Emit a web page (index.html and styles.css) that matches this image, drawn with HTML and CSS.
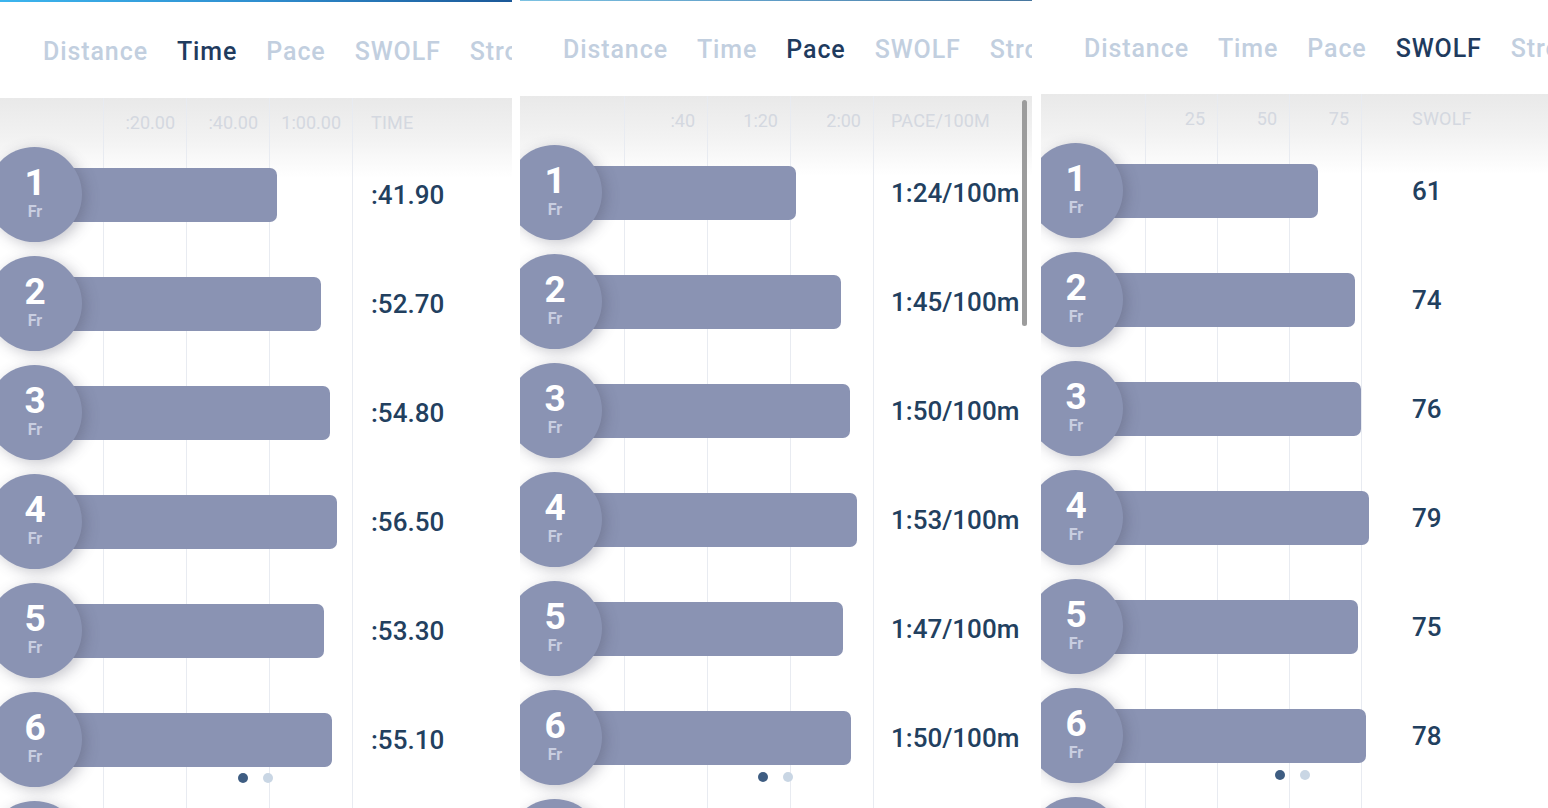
FILE: index.html
```html
<!DOCTYPE html>
<html lang="en">
<head>
<meta charset="utf-8">
<title>Swim laps</title>
<link rel="stylesheet" href="styles.css">
</head>
<body>
<div class="page">

  <section class="panel panel--time">
    <div class="topline topline--time"></div>
    <nav class="tabs tabs--time">
      <span class="tab">Distance</span>
      <span class="tab tab--active">Time</span>
      <span class="tab">Pace</span>
      <span class="tab">SWOLF</span>
      <span class="tab">Strokes</span>
    </nav>
    <div class="chart chart--wide">
      <div class="axis">
        <span class="tick">:20.00</span>
        <span class="tick">:40.00</span>
        <span class="tick">1:00.00</span>
        <span class="axis-title">TIME</span>
      </div>
      <div class="row"><div class="lane"><div class="lap"><span class="lap-num">1</span><span class="lap-stroke">Fr</span></div><div class="bar" style="width:225px"></div></div><div class="value">:41.90</div></div>
      <div class="row"><div class="lane"><div class="lap"><span class="lap-num">2</span><span class="lap-stroke">Fr</span></div><div class="bar" style="width:269px"></div></div><div class="value">:52.70</div></div>
      <div class="row"><div class="lane"><div class="lap"><span class="lap-num">3</span><span class="lap-stroke">Fr</span></div><div class="bar" style="width:278px"></div></div><div class="value">:54.80</div></div>
      <div class="row"><div class="lane"><div class="lap"><span class="lap-num">4</span><span class="lap-stroke">Fr</span></div><div class="bar" style="width:285px"></div></div><div class="value">:56.50</div></div>
      <div class="row"><div class="lane"><div class="lap"><span class="lap-num">5</span><span class="lap-stroke">Fr</span></div><div class="bar" style="width:272px"></div></div><div class="value">:53.30</div></div>
      <div class="row"><div class="lane"><div class="lap"><span class="lap-num">6</span><span class="lap-stroke">Fr</span></div><div class="bar" style="width:280px"></div></div><div class="value">:55.10</div></div>
      <div class="row"><div class="lane"><div class="lap"></div></div></div>
    </div>
    <div class="dots dots--time"><span class="dot dot--on"></span><span class="dot"></span></div>
  </section>

  <section class="panel panel--pace">
    <div class="topline topline--pace"></div>
    <nav class="tabs tabs--pace">
      <span class="tab">Distance</span>
      <span class="tab">Time</span>
      <span class="tab tab--active">Pace</span>
      <span class="tab">SWOLF</span>
      <span class="tab">Strokes</span>
    </nav>
    <div class="chart chart--wide chart--shift">
      <div class="axis">
        <span class="tick">:40</span>
        <span class="tick">1:20</span>
        <span class="tick">2:00</span>
        <span class="axis-title">PACE/100M</span>
      </div>
      <div class="row"><div class="lane"><div class="lap"><span class="lap-num">1</span><span class="lap-stroke">Fr</span></div><div class="bar" style="width:224px"></div></div><div class="value">1:24/100m</div></div>
      <div class="row"><div class="lane"><div class="lap"><span class="lap-num">2</span><span class="lap-stroke">Fr</span></div><div class="bar" style="width:269px"></div></div><div class="value">1:45/100m</div></div>
      <div class="row"><div class="lane"><div class="lap"><span class="lap-num">3</span><span class="lap-stroke">Fr</span></div><div class="bar" style="width:278px"></div></div><div class="value">1:50/100m</div></div>
      <div class="row"><div class="lane"><div class="lap"><span class="lap-num">4</span><span class="lap-stroke">Fr</span></div><div class="bar" style="width:285px"></div></div><div class="value">1:53/100m</div></div>
      <div class="row"><div class="lane"><div class="lap"><span class="lap-num">5</span><span class="lap-stroke">Fr</span></div><div class="bar" style="width:271px"></div></div><div class="value">1:47/100m</div></div>
      <div class="row"><div class="lane"><div class="lap"><span class="lap-num">6</span><span class="lap-stroke">Fr</span></div><div class="bar" style="width:279px"></div></div><div class="value">1:50/100m</div></div>
      <div class="row"><div class="lane"><div class="lap"></div></div></div>
      <div class="scrollbar"></div>
    </div>
    <div class="dots dots--pace"><span class="dot dot--on"></span><span class="dot"></span></div>
  </section>

  <section class="panel panel--swolf">
    <nav class="tabs tabs--swolf">
      <span class="tab">Distance</span>
      <span class="tab">Time</span>
      <span class="tab">Pace</span>
      <span class="tab tab--active">SWOLF</span>
      <span class="tab">Strokes</span>
    </nav>
    <div class="chart chart--narrow">
      <div class="axis">
        <span class="tick tick--narrow">25</span>
        <span class="tick tick--narrow">50</span>
        <span class="tick tick--narrow">75</span>
        <span class="axis-title axis-title--narrow">SWOLF</span>
      </div>
      <div class="row"><div class="lane"><div class="lap"><span class="lap-num">1</span><span class="lap-stroke">Fr</span></div><div class="bar" style="width:225px"></div></div><div class="value">61</div></div>
      <div class="row"><div class="lane"><div class="lap"><span class="lap-num">2</span><span class="lap-stroke">Fr</span></div><div class="bar" style="width:262px"></div></div><div class="value">74</div></div>
      <div class="row"><div class="lane"><div class="lap"><span class="lap-num">3</span><span class="lap-stroke">Fr</span></div><div class="bar" style="width:268px"></div></div><div class="value">76</div></div>
      <div class="row"><div class="lane"><div class="lap"><span class="lap-num">4</span><span class="lap-stroke">Fr</span></div><div class="bar" style="width:276px"></div></div><div class="value">79</div></div>
      <div class="row"><div class="lane"><div class="lap"><span class="lap-num">5</span><span class="lap-stroke">Fr</span></div><div class="bar" style="width:265px"></div></div><div class="value">75</div></div>
      <div class="row"><div class="lane"><div class="lap"><span class="lap-num">6</span><span class="lap-stroke">Fr</span></div><div class="bar" style="width:273px"></div></div><div class="value">78</div></div>
      <div class="row"><div class="lane"><div class="lap"></div></div></div>
    </div>
    <div class="dots dots--swolf"><span class="dot dot--on"></span><span class="dot"></span></div>
  </section>

</div>
</body>
</html>
```

FILE: styles.css
```css
* { box-sizing: border-box; }

html, body {
  margin: 0;
  padding: 0;
  background: #ffffff;
  height: 808px;
  overflow: hidden;
}

body {
  font-family: Roboto, "Liberation Sans", Arial, sans-serif;
}

.page {
  display: flex;
  width: 1548px;
  height: 808px;
}

.panel {
  position: relative;
  flex: none;
  height: 808px;
  overflow: hidden;
  display: flex;
  flex-direction: column;
  background: #ffffff;
}

.panel--time { width: 512px; }
.panel--pace { width: 512px; margin-left: 8px; }
.panel--swolf { width: 507px; margin-left: 9px; }

.topline { flex: none; }
.topline--time {
  height: 2px;
  background: linear-gradient(90deg, #3cb5ee 0%, #2f8fd0 50%, #1b5898 100%);
}
.topline--pace {
  height: 1px;
  background: linear-gradient(90deg, #7cc2e2 0%, #5f9cc6 50%, #48779f 100%);
}

.tabs {
  flex: none;
  display: flex;
  align-items: center;
  gap: 29px;
  padding-left: 43px;
  white-space: nowrap;
  font-size: 25px;
  letter-spacing: 0.9px;
}
.tabs--time { height: 96px; padding-top: 2px; }
.tabs--pace { height: 95px; padding-top: 2px; }
.tabs--swolf { height: 94px; padding-top: 2px; }

.tab {
  color: #c2cfdf;
  font-weight: 500;
}
.tab--active {
  color: #1f3b5e;
  font-weight: 500;
}

.chart {
  position: relative;
  flex: 1;
  background-repeat: no-repeat;
}

.chart--wide {
  background-image:
    linear-gradient(#e8ebf1, #e8ebf1),
    linear-gradient(#e8ebf1, #e8ebf1),
    linear-gradient(#e8ebf1, #e8ebf1),
    linear-gradient(#e8ebf1, #e8ebf1),
    linear-gradient(180deg, #e9e9e9 0px, #f2f2f2 40px, #ffffff 80px);
  background-size: 1px 100%, 1px 100%, 1px 100%, 1px 100%, 100% 100%;
  background-position: 103px 0, 186px 0, 269px 0, 352px 0, 0 0;
  background-repeat: no-repeat;
}
.chart--shift {
  background-position: 104px 0, 187px 0, 270px 0, 353px 0, 0 0;
}
.chart--narrow {
  background-image:
    linear-gradient(#e8ebf1, #e8ebf1),
    linear-gradient(#e8ebf1, #e8ebf1),
    linear-gradient(#e8ebf1, #e8ebf1),
    linear-gradient(#e8ebf1, #e8ebf1),
    linear-gradient(180deg, #e9e9e9 0px, #f2f2f2 40px, #ffffff 80px);
  background-size: 1px 100%, 1px 100%, 1px 100%, 1px 100%, 100% 100%;
  background-position: 104px 0, 176px 0, 248px 0, 320px 0, 0 0;
  background-repeat: no-repeat;
}

.axis {
  height: 42px;
  padding-top: 14px;
  padding-left: 103px;
  display: flex;
  font-size: 18px;
  line-height: 22px;
  color: #d4d8e0;
  font-weight: 400;
}
.chart--narrow .axis { padding-left: 104px; }

.tick {
  width: 83px;
  text-align: right;
  padding-right: 11px;
}
.tick--narrow {
  width: 72px;
  padding-right: 12px;
}

.axis-title {
  padding-left: 19px;
  letter-spacing: 0.2px;
}
.axis-title--narrow { padding-left: 51px; }

.row {
  height: 109px;
  display: grid;
  grid-template-columns: 352px 1fr;
  align-items: center;
}

.lane {
  display: flex;
  align-items: center;
}

.lap {
  position: relative;
  z-index: 1;
  flex: none;
  width: 95px;
  height: 95px;
  margin-left: -13px;
  border-radius: 50%;
  background: #8a93b3;
  box-shadow: 4px 3px 14px rgba(70, 70, 90, 0.3);
  display: flex;
  flex-direction: column;
  align-items: center;
  justify-content: center;
  padding-left: 1px;
}

.lap-num {
  color: #ffffff;
  font-size: 37px;
  font-weight: 700;
  line-height: 37px;
  margin-top: -4px;
}

.lap-stroke {
  color: #c9cee1;
  font-size: 16px;
  font-weight: 700;
  line-height: 19px;
  margin-top: 1px;
}

.bar {
  flex: none;
  height: 54px;
  margin-left: -30px;
  background: #8a93b3;
  border-radius: 0 7px 7px 0;
}

.value {
  padding-left: 19px;
  color: #22405f;
  font-size: 26px;
  font-weight: 500;
  white-space: nowrap;
  padding-top: 1px;
}

.scrollbar {
  position: absolute;
  left: 502px;
  top: 4px;
  width: 5px;
  height: 226px;
  border-radius: 3px;
  background: #9c9c9c;
}

.dots {
  position: absolute;
  left: 0;
  right: 0;
  display: flex;
  justify-content: center;
  gap: 15px;
}
.dots--time { bottom: 25px; padding-right: 1px; }
.dots--pace { bottom: 26px; padding-right: 1px; }
.dots--swolf { bottom: 28px; padding-right: 4px; }

.dot {
  width: 10px;
  height: 10px;
  border-radius: 50%;
  background: #c9d6e4;
}
.dot--on { background: #3e5d82; }
```
